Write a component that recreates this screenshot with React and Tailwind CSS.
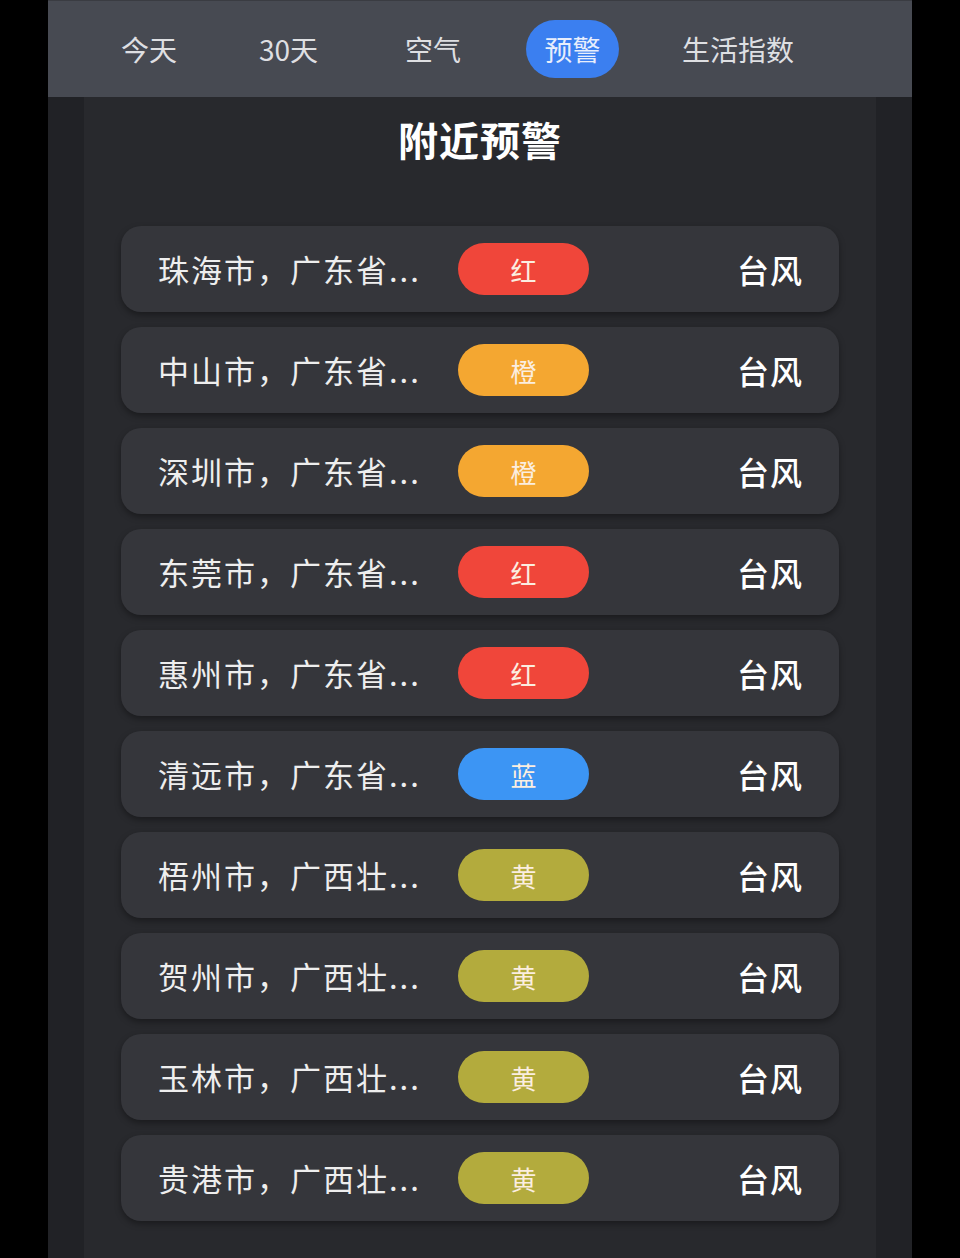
const tabs = ["今天", "30天", "空气", "预警", "生活指数"];

const levels = {
  红: "bg-[#f0463a]",
  橙: "bg-[#f4a731]",
  蓝: "bg-[#3c95f4]",
  黄: "bg-[#b3ab3d]",
};

const warnings = [
  { place: "珠海市，广东省...", level: "红" },
  { place: "中山市，广东省...", level: "橙" },
  { place: "深圳市，广东省...", level: "橙" },
  { place: "东莞市，广东省...", level: "红" },
  { place: "惠州市，广东省...", level: "红" },
  { place: "清远市，广东省...", level: "蓝" },
  { place: "梧州市，广西壮...", level: "黄" },
  { place: "贺州市，广西壮...", level: "黄" },
  { place: "玉林市，广西壮...", level: "黄" },
  { place: "贵港市，广西壮...", level: "黄" },
];

export default function App() {
  return (
    <div
      className="bg-black min-h-screen h-[1258px] overflow-hidden px-12"
      style={{ fontFamily: '"Noto Sans CJK SC", "Noto Sans", sans-serif' }}
    >
      <div className="h-full bg-[#212226] flex flex-col">
        {/* Tabs */}
        <div className="h-[97px] shrink-0 bg-[#474a52] border-t border-[#3a3c42] flex items-center pl-[73px] text-[28px] text-[#dedfe2]">
          <span className="w-[138px]">今天</span>
          <span className="w-[146px]">30天</span>
          <span className="w-[121px]">空气</span>
          <span className="w-[93px] h-[58px] rounded-full bg-[#3b7ff0] flex items-center justify-center text-[#e8eefc]">
            预警
          </span>
          <span className="ml-[63px]">生活指数</span>
        </div>

        {/* Panel */}
        <div className="flex-1 mx-9 bg-[#28292d] flex flex-col items-center">
          <h1 className="mt-[14px] text-[40px] font-bold text-white leading-[56px] tracking-[1px]">
            附近预警
          </h1>

          <div className="mt-[59px] w-[718px] flex flex-col gap-[15px]">
            {warnings.map((item) => (
              <div
                key={item.place}
                className="h-[86px] rounded-[20px] bg-[#35363b] shadow-[0_3px_6px_rgba(0,0,0,0.35)] flex items-center pl-[37px] pr-[36px]"
              >
                <span className="w-[300px] text-[31px] tracking-[2px] text-[#eeeeee] whitespace-nowrap">
                  {item.place}
                </span>
                <span
                  className={`w-[131px] h-[52px] rounded-full flex items-center justify-center text-[26px] text-[#fbeee0] ${levels[item.level]}`}
                >
                  {item.level}
                </span>
                <span className="ml-auto text-[32px] font-medium text-white tracking-[1px]">台风</span>
              </div>
            ))}
          </div>
        </div>
      </div>
    </div>
  );
}
